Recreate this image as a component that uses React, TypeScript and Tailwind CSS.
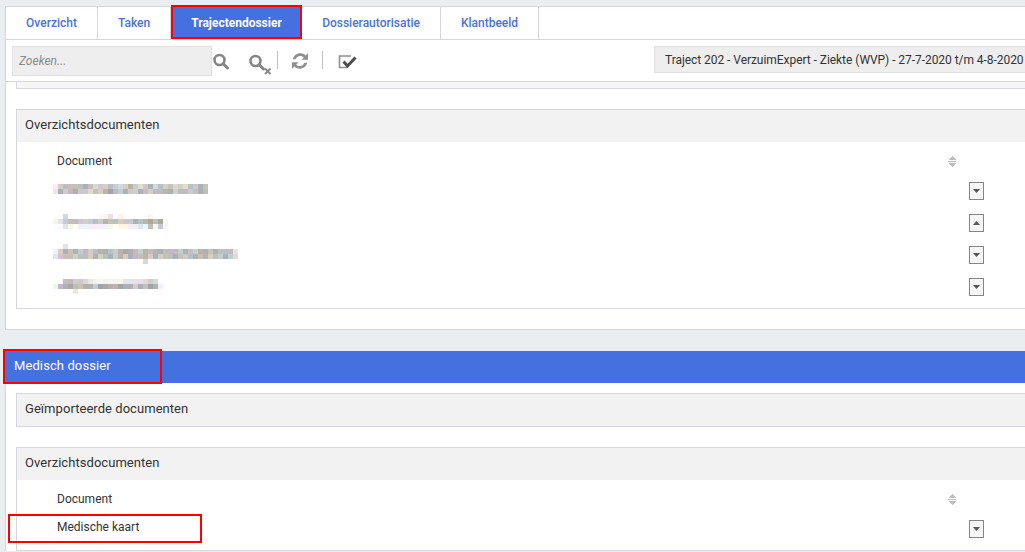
import React from "react";

function Mosaic({ seed, rows }: { seed: number; rows: string[] }) {
  const cols = Math.max(...rows.map((r) => r.length));
  const tints = [
    [0, 0, 0],
    [8, 2, -6],
    [-6, 0, 8],
    [6, -6, 6],
    [-8, 4, 4],
    [10, 4, -12],
  ];
  let s = seed;
  const next = () => {
    s = (s * 73 + 41) % 1009;
    return s;
  };
  const cells: React.ReactNode[] = [];
  rows.forEach((row, y) => {
    row.split("").forEach((ch, x) => {
      if (ch === " ") return;
      const t = tints[next() % tints.length];
      const base = 255 - parseInt(ch, 10) * 13;
      const col = `rgb(${Math.min(255, base + t[0])},${Math.min(255, base + t[1])},${Math.min(255, base + t[2])})`;
      cells.push(<rect key={`${x}-${y}`} x={x * 5} y={y * 5} width={5} height={5} fill={col} />);
    });
  });
  return (
    <svg width={cols * 5} height={rows.length * 5} shapeRendering="crispEdges" className="block">
      {cells}
    </svg>
  );
}

function SearchIcon({ x = false }: { x?: boolean }) {
  return (
    <svg width="26" height="24" viewBox="0 0 26 24" className="block">
      <circle cx="8.5" cy="9" r="5" fill="none" stroke="#858585" strokeWidth="2.6" />
      <path d="M12.2 12.8 L16.5 17" stroke="#858585" strokeWidth="3" strokeLinecap="round" />
      {x && <path d="M18 16.5 L23.5 22 M23.5 16.5 L18 22" stroke="#858585" strokeWidth="1.8" />}
    </svg>
  );
}

function RefreshIcon() {
  return (
    <svg width="20" height="20" viewBox="0 0 16 16" className="block">
      <path
        d="M2.2 6.6 C3 3.6 5.4 1.8 8.2 1.8 C10 1.8 11.4 2.5 12.5 3.6 L14.4 1.8 V7 H9.2 L11 5.2 C10.3 4.4 9.3 4 8.2 4 C6.4 4 5 5 4.4 6.6 Z"
        fill="#8f8f8f"
      />
      <path
        d="M13.8 9.4 C13 12.4 10.6 14.2 7.8 14.2 C6 14.2 4.6 13.5 3.5 12.4 L1.6 14.2 V9 H6.8 L5 10.8 C5.7 11.6 6.7 12 7.8 12 C9.6 12 11 11 11.6 9.4 Z"
        fill="#8f8f8f"
      />
    </svg>
  );
}

function CheckBoxIcon() {
  return (
    <svg width="20" height="16" viewBox="0 0 20 16" className="block">
      <path d="M13 2 H1.5 V13.5 H9" fill="none" stroke="#8f8f8f" strokeWidth="1.6" />
      <path d="M5.5 7.5 L9.5 12 L17.5 3.5" fill="none" stroke="#4d4d4d" strokeWidth="3" />
    </svg>
  );
}

function SortIcon() {
  return (
    <svg width="8" height="11" viewBox="0 0 8 11" className="block" shapeRendering="crispEdges">
      <path d="M4 0 L8 4 H0 Z" fill="#bdbdbd" />
      <rect x="0" y="5" width="8" height="1" fill="#bdbdbd" />
      <path d="M0 7 H8 L4 11 Z" fill="#bdbdbd" />
    </svg>
  );
}

function ToggleBtn({ up = false }: { up?: boolean }) {
  return (
    <div className="flex h-[18px] w-[15px] items-center justify-center border border-[#858585] bg-[#f6f6f6]">
      <svg width="7" height="4" viewBox="0 0 7 4" className="block">
        <path d={up ? "M3.5 0 L7 4 H0 Z" : "M0 0 H7 L3.5 4 Z"} fill="#555" />
      </svg>
    </div>
  );
}

function PanelHeader({ title }: { title: string }) {
  return (
    <div className="flex h-8 items-center bg-[#f2f2f2] pb-[2px] pl-2 text-[13px] tracking-[0.05px] text-[#333]">
      {title}
    </div>
  );
}

function DocHeadRow() {
  return (
    <div className="flex h-[33px] items-center pt-[5px] pl-10 text-xs text-[#333]">
      <span className="w-[891px]">Document</span>
      <SortIcon />
    </div>
  );
}

function DocRow({ children, up = false, pad = "pb-[4px]" }: { children: React.ReactNode; up?: boolean; pad?: string }) {
  return (
    <div className="flex h-8 items-center pl-[36px] text-xs text-[#333]">
      <div className={`w-[916px] ${pad}`}>{children}</div>
      <ToggleBtn up={up} />
    </div>
  );
}

function Tab({ label, active = false, w }: { label: string; active?: boolean; w: string }) {
  return (
    <div
      className={`flex h-full items-center justify-center text-xs ${w} ${
        active
          ? "bg-[#4570e0] font-bold text-white"
          : "border-r border-[#d5d6de] font-medium text-[#4a72e0]"
      }`}
    >
      {label}
    </div>
  );
}

export default function App() {
  return (
    <div
      className="relative h-[552px] w-[1025px] overflow-hidden bg-[#ebeef1] pt-[6px] pl-[5px]"
      style={{ fontFamily: "Roboto, 'Liberation Sans', sans-serif" }}
    >
      <div className="w-[1100px]">
        <div className="border border-[#d5d6de] bg-white pb-5">
          <div className="flex h-8 items-stretch bg-white">
            <Tab label="Overzicht" w="w-[92px]" />
            <Tab label="Taken" w="w-[73px]" />
            <Tab label="Trajectendossier" active w="w-[131px]" />
            <Tab label="Dossierautorisatie" w="w-[139px]" />
            <Tab label="Klantbeeld" w="w-[98px]" />
          </div>
          <div className="flex h-[43px] items-start border-y border-[#d5d6de] pt-[6px] pl-[6px]">
            <div className="flex h-[30px] w-[200px] items-center border border-[#e0e0e0] bg-[#eeeeee] pl-[6px] text-xs text-[#8a8a8a] italic">
              Zoeken...
            </div>
            <div className="ml-[-1px] pt-[5px]">
              <SearchIcon />
            </div>
            <div className="ml-[10px] pt-[6px]">
              <SearchIcon x />
            </div>
            <div className="mt-[5px] ml-[4px] h-[18px] w-px bg-[#c4c4c4]" />
            <div className="ml-[12px] pt-[5px]">
              <RefreshIcon />
            </div>
            <div className="mt-[5px] ml-[12px] h-[18px] w-px bg-[#c4c4c4]" />
            <div className="ml-[15px] pt-[8px]">
              <CheckBoxIcon />
            </div>
            <div className="ml-[296px] flex h-[27px] w-[420px] items-center border border-[#e0e0e0] bg-[#eeeeee] pl-[10px] text-xs tracking-[-0.05px] whitespace-nowrap text-[#333]">
              Traject 202 - VerzuimExpert - Ziekte (WVP) - 27-7-2020 t/m 4-8-2020
            </div>
          </div>
          <div className="px-[10px]">
            <div className="h-[7px] border-x border-b border-[#d5d6de] bg-[#f6f6f6]" />
            <div className="mt-5 border border-[#d5d6de]">
              <PanelHeader title="Overzichtsdocumenten" />
              <DocHeadRow />
              <DocRow>
                <Mosaic seed={17} rows={["1455556534454346434635453435465", "2645644354675464465455664554565"]} />
              </DocRow>
              <DocRow up pad="pb-[3px]">
                <Mosaic
                  seed={91}
                  rows={["0 3     0012 10    1", "12455444546554446567571", "00210111111101111215141"]}
                />
              </DocRow>
              <DocRow pad="pb-[2px]">
                <Mosaic
                  seed={233}
                  rows={[
                    "0 2         0",
                    "1465645456654676546566555465466565552",
                    "2455455464564646556464556545656454643",
                    "                  3",
                  ]}
                />
              </DocRow>
              <DocRow pad="pb-[1px]">
                <Mosaic
                  seed={401}
                  rows={["0 5544321111112222343", "1567556647766766465761", "    2"]}
                />
              </DocRow>
              <div className="h-[5px]" />
            </div>
          </div>
        </div>
        <div className="mt-[21px] flex h-8 items-center bg-[#4570e0] pb-[2px] pl-[9px] text-[13px] tracking-[0.1px] text-white">
          Medisch dossier
        </div>
        <div className="border-x border-[#d5d6de] bg-white px-[10px] pt-[10px]">
          <div className="border border-[#d5d6de]">
            <PanelHeader title="Geïmporteerde documenten" />
          </div>
          <div className="mt-5 border border-[#d5d6de]">
            <PanelHeader title="Overzichtsdocumenten" />
            <DocHeadRow />
            <DocRow>
              <span className="ml-1 block">Medische kaart</span>
            </DocRow>
            <div className="h-[5px]" />
          </div>
        </div>
      </div>
      <div className="absolute top-[5px] left-[171px] h-[34px] w-[131px] border-2 border-[#ff0000]" />
      <div className="absolute top-[349px] left-[3px] h-[35px] w-[159px] border-2 border-[#ff0000]" />
      <div className="absolute top-[514px] left-[8px] h-[29px] w-[194px] border-2 border-[#ff0000]" />
    </div>
  );
}
